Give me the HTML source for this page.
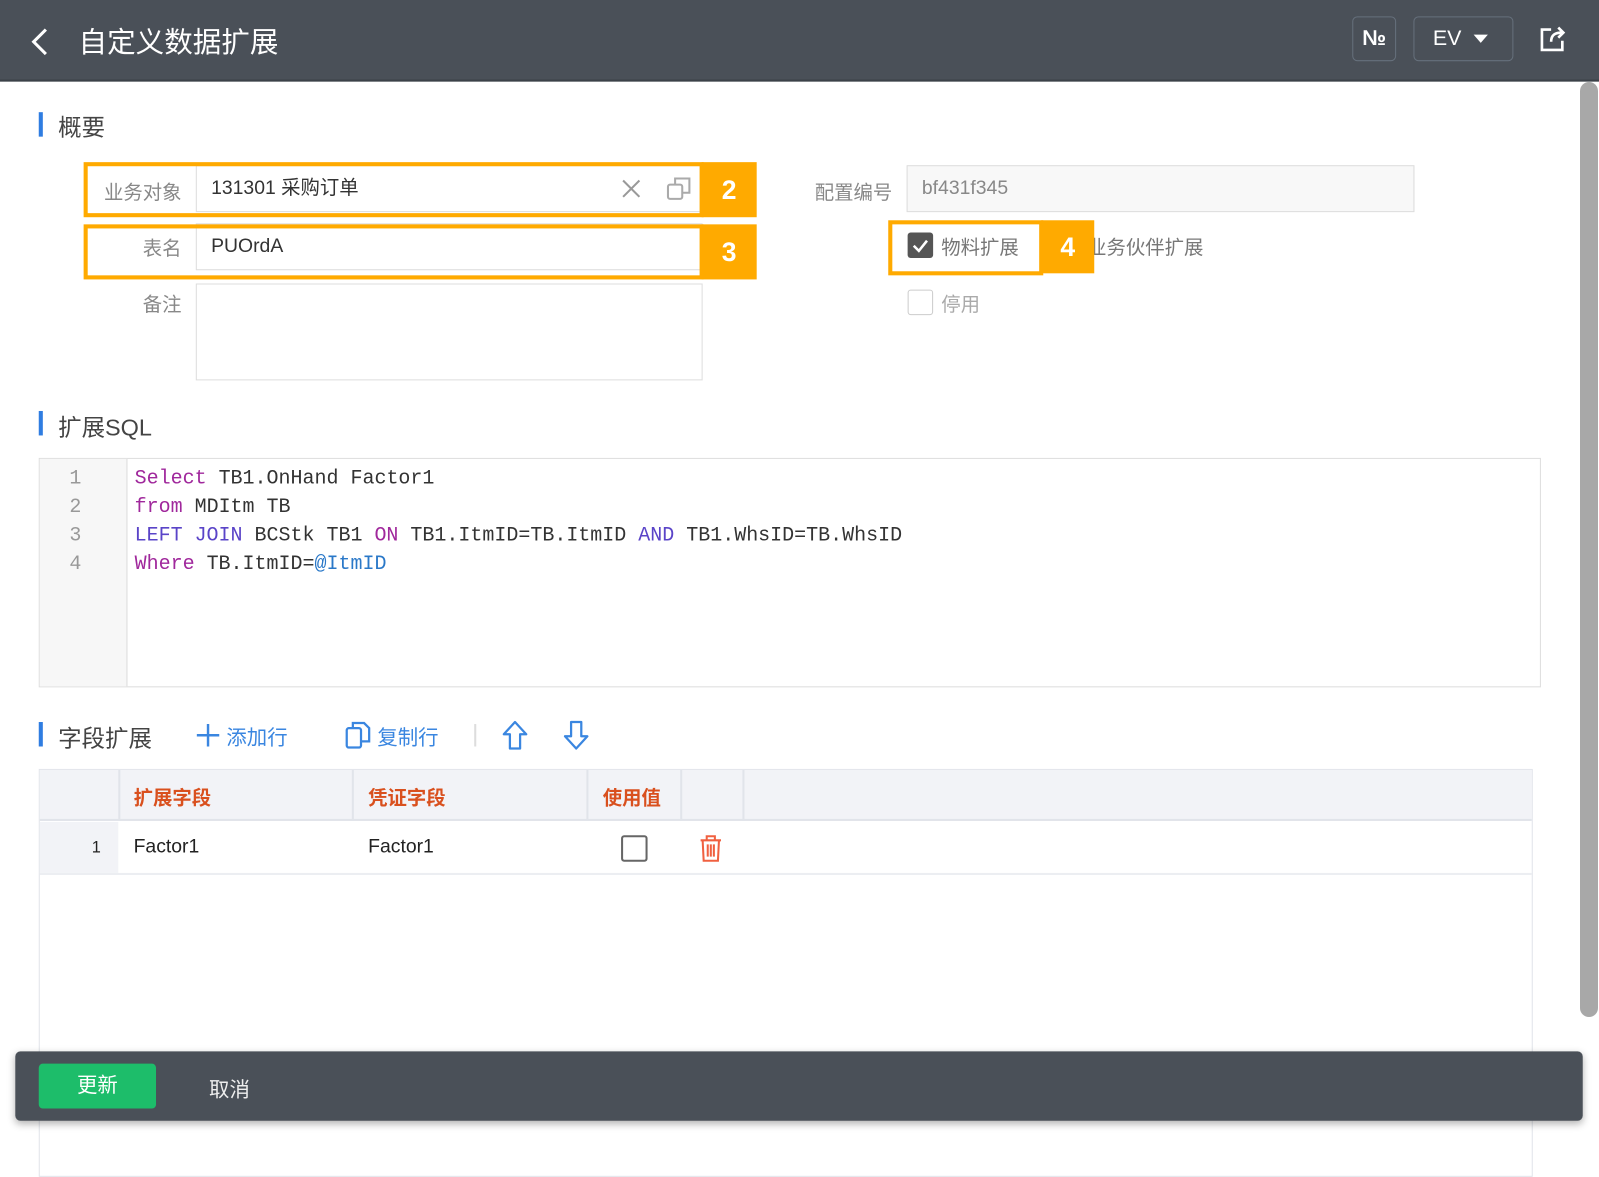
<!DOCTYPE html>
<html><head><meta charset="utf-8"><style>
*{margin:0;padding:0;box-sizing:border-box}
body{width:1599px;height:1136px;position:relative;overflow:hidden;background:#fff;font-family:"Liberation Sans","Noto Sans CJK SC",sans-serif;color:#333}
.a{position:absolute}
#w{position:absolute;left:0;top:0;width:1599px;height:1136px;transform:scale(1.0198);transform-origin:0 0}
.hdr{left:0;top:0;width:1599px;height:80px;background:#4a5058;border-bottom:2px solid #3c4148}
.sec{font-size:23px;color:#444}
.bar{width:4px;height:24px;background:#2f7de1}
.lbl{font-size:19px;color:#888;text-align:right}
.inp{border:1px solid #ddd;background:#fff;font-size:19px;color:#333;padding-left:14px}
.org{border:4px solid #ffaa00}
.tag{background:#ffaa00;color:#fff;font-size:26px;font-weight:bold;text-align:center}
.code{font-family:"Liberation Mono",monospace;font-size:19.6px;line-height:28px;color:#333;white-space:pre}
.kw{color:#a0289c}.kb{color:#5a44c8}.var{color:#2a78c8}
.th{font-size:19px;font-weight:bold;color:#d9501e}
.blue{color:#3a86e0;font-size:20px}
</style></head><body>
<div id="w">
<div class="a hdr"></div>
<svg class="a" style="left:28px;top:26px" width="22" height="30"><path d="M17 3 L5 15 L17 27" stroke="#fff" stroke-width="3" fill="none"/></svg>
<div class="a" style="left:77px;top:20px;font-size:28px;color:#fff">自定义数据扩展</div>
<div class="a" style="left:1326px;top:16px;width:43px;height:44px;border:1.5px solid #66707c;border-radius:5px;color:#fff;font-size:21px;font-weight:bold;text-align:center;line-height:42px">№</div>
<div class="a" style="left:1386px;top:16px;width:98px;height:44px;border:1.5px solid #66707c;border-radius:5px;color:#fff;font-size:21px;line-height:42px;padding-left:18px">EV</div>
<svg class="a" style="left:1444px;top:33px" width="16" height="10"><path d="M1 1 L15 1 L8 9Z" fill="#fff"/></svg>
<svg class="a" style="left:1508px;top:24px" width="30" height="28"><path d="M13 5 H4 V25 H24 V16" stroke="#fff" stroke-width="2.6" fill="none"/><path d="M13 17 C13 10 17 8 24 8 M20 3 L25 8 L20 13" stroke="#fff" stroke-width="2.6" fill="none"/></svg>

<div class="a bar" style="left:38px;top:110px"></div>
<div class="a sec" style="left:57px;top:106px">概要</div>

<div class="a lbl" style="left:86px;top:174px;width:92px">业务对象</div>
<div class="a inp" style="left:192px;top:162px;width:497px;height:46px;line-height:44px">131301 采购订单</div>
<svg class="a" style="left:609px;top:175px" width="20" height="20"><path d="M2 2 L18 18 M18 2 L2 18" stroke="#999" stroke-width="2"/></svg>
<svg class="a" style="left:653px;top:172px" width="26" height="26"><rect x="2" y="9" width="14" height="14" rx="2" stroke="#aaa" stroke-width="2" fill="none"/><path d="M9 9 V3 H23 V17 H16" stroke="#aaa" stroke-width="2" fill="none"/></svg>
<div class="a org" style="left:82px;top:159px;width:608px;height:54px"></div>
<div class="a tag" style="left:688px;top:159px;width:54px;height:54px;line-height:54px">2</div>

<div class="a lbl" style="left:86px;top:229px;width:92px">表名</div>
<div class="a inp" style="left:192px;top:219px;width:497px;height:46px;line-height:44px">PUOrdA</div>
<div class="a org" style="left:82px;top:220px;width:608px;height:54px"></div>
<div class="a tag" style="left:688px;top:220px;width:54px;height:54px;line-height:54px">3</div>

<div class="a lbl" style="left:86px;top:284px;width:92px">备注</div>
<div class="a inp" style="left:192px;top:278px;width:497px;height:95px"></div>

<div class="a lbl" style="left:780px;top:174px;width:95px">配置编号</div>
<div class="a inp" style="left:889px;top:162px;width:498px;height:46px;line-height:44px;background:#f8f8f8;color:#888">bf431f345</div>
<div class="a" style="left:890px;top:228px;width:25px;height:25px;background:#555;border-radius:3px"></div>
<svg class="a" style="left:890px;top:228px" width="25" height="25"><path d="M6 13 L11 18 L19 8" stroke="#fff" stroke-width="2.5" fill="none"/></svg>
<div class="a" style="left:923px;top:228px;font-size:19px;color:#777">物料扩展</div>
<div class="a" style="left:1066px;top:228px;font-size:19px;color:#777">业务伙伴扩展</div>
<div class="a org" style="left:871px;top:216px;width:152px;height:54px"></div>
<div class="a tag" style="left:1021px;top:216px;width:52px;height:52px;line-height:52px">4</div>
<div class="a" style="left:890px;top:284px;width:25px;height:25px;border:1.5px solid #ccc;border-radius:3px"></div>
<div class="a" style="left:923px;top:284px;font-size:19px;color:#aaa">停用</div>

<div class="a bar" style="left:38px;top:403px"></div>
<div class="a sec" style="left:57px;top:400px">扩展SQL</div>
<div class="a" style="left:38px;top:449px;width:1473px;height:225px;border:1.5px solid #ddd"></div>
<div class="a" style="left:39px;top:450px;width:86px;height:223px;background:#f7f7f7;border-right:1px solid #ddd"></div>
<div class="a code" style="left:68px;top:455px;color:#999">1
2
3
4</div>
<div class="a code" style="left:132px;top:455px"><span class="kw">Select</span> TB1.OnHand Factor1
<span class="kw">from</span> MDItm TB
<span class="kb">LEFT JOIN</span> BCStk TB1 <span class="kw">ON</span> TB1.ItmID=TB.ItmID <span class="kb">AND</span> TB1.WhsID=TB.WhsID
<span class="kw">Where</span> TB.ItmID=<span class="var">@ItmID</span></div>

<div class="a bar" style="left:38px;top:708px"></div>
<div class="a sec" style="left:57px;top:705px">字段扩展</div>
<svg class="a" style="left:192px;top:709px" width="24" height="24"><path d="M12 1 V23 M1 12 H23" stroke="#3a86e0" stroke-width="2.4"/></svg>
<div class="a blue" style="left:222px;top:707px">添加行</div>
<svg class="a" style="left:338px;top:707px" width="26" height="28"><rect x="2" y="7" width="14" height="19" rx="2" stroke="#3a86e0" stroke-width="2.2" fill="none"/><path d="M8 7 V2 H19 L24 7 V20 H16" stroke="#3a86e0" stroke-width="2.2" fill="none"/></svg>
<div class="a blue" style="left:370px;top:707px">复制行</div>
<div class="a" style="left:465px;top:710px;width:2px;height:22px;background:#ddd"></div>
<svg class="a" style="left:492px;top:706px" width="26" height="30"><path d="M13 2 L24 14 H18 V28 H8 V14 H2 Z" stroke="#3a86e0" stroke-width="2.2" fill="none" stroke-linejoin="round"/></svg>
<svg class="a" style="left:552px;top:706px" width="26" height="30"><path d="M13 28 L24 16 H18 V2 H8 V16 H2 Z" stroke="#3a86e0" stroke-width="2.2" fill="none" stroke-linejoin="round"/></svg>

<div class="a" style="left:38px;top:754px;width:1465px;height:400px;border:1.5px solid #e1e4ea"></div>
<div class="a" style="left:39px;top:755px;width:1463px;height:50px;background:#f2f3f7;border-bottom:2px solid #e1e4ea"></div>
<div class="a" style="left:39px;top:806px;width:77px;height:50px;background:#f2f3f7"></div>
<div class="a" style="left:116px;top:755px;width:1.5px;height:50px;background:#e1e4ea"></div>
<div class="a" style="left:345px;top:755px;width:1.5px;height:50px;background:#e1e4ea"></div>
<div class="a" style="left:575px;top:755px;width:1.5px;height:50px;background:#e1e4ea"></div>
<div class="a" style="left:667px;top:755px;width:1.5px;height:50px;background:#e1e4ea"></div>
<div class="a" style="left:728px;top:755px;width:1.5px;height:50px;background:#e1e4ea"></div>
<div class="a th" style="left:131px;top:768px">扩展字段</div>
<div class="a th" style="left:361px;top:768px">凭证字段</div>
<div class="a th" style="left:591px;top:768px">使用值</div>
<div class="a" style="left:39px;top:856px;width:1463px;height:1.5px;background:#eceef2"></div>
<div class="a" style="left:90px;top:823px;font-size:16px;color:#222">1</div>
<div class="a" style="left:131px;top:820px;font-size:19px;color:#222">Factor1</div>
<div class="a" style="left:361px;top:820px;font-size:19px;color:#222">Factor1</div>
<div class="a" style="left:609px;top:819px;width:26px;height:26px;border:2px solid #666;border-radius:3px"></div>
<svg class="a" style="left:684px;top:818px" width="26" height="28"><path d="M3 6 H23 M9 6 V2 H17 V6 M5 6 L6 26 H20 L21 6 M10 10 V22 M13 10 V22 M16 10 V22" stroke="#f06040" stroke-width="2" fill="none"/></svg>

<div class="a" style="left:15px;top:1031px;width:1537px;height:68px;background:#4a5058;border-radius:5px;box-shadow:0 3px 8px rgba(0,0,0,.3)"></div>
<div class="a" style="left:38px;top:1043px;width:115px;height:44px;background:#1dbd6a;border-radius:4px;color:#fff;font-size:20px;text-align:center;line-height:44px">更新</div>
<div class="a" style="left:205px;top:1052px;font-size:20px;color:#eee">取消</div>
</div>
<div class="a" style="left:1580px;top:82px;width:18px;height:935px;background:#a8a8a8;border-radius:9px"></div>
</body></html>
